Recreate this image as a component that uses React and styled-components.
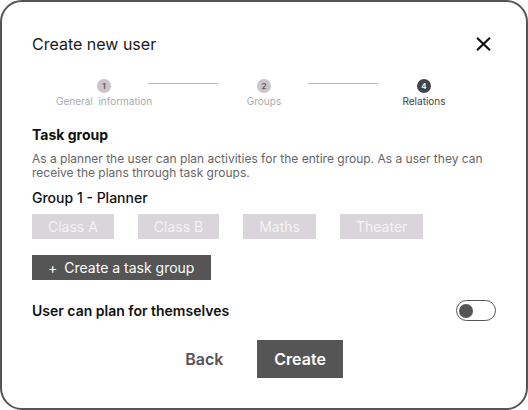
import React from "react";
import styled, { createGlobalStyle } from "styled-components";

const GlobalStyle = createGlobalStyle`
  * { box-sizing: border-box; }
  body {
    margin: 0;
    background: #ffffff;
    font-family: Inter, "Noto Sans", sans-serif;
    color: #1a1a1a;
  }
`;

const steps = [
  { n: 1, label: "General  information", done: true },
  { n: 2, label: "Groups", done: true },
  { n: 4, label: "Relations", active: true },
];

const chips = ["Class A", "Class B", "Maths", "Theater"];

const CloseIcon = () => (
  <svg width="15" height="14" viewBox="0 0 15 14" fill="none">
    <path d="M1 0.8L14 13.2M14 0.8L1 13.2" stroke="#111" strokeWidth="2.2" />
  </svg>
);

export default function App() {
  return (
    <>
      <GlobalStyle />
      <Dialog>
        <Header>
          <Title>Create new user</Title>
          <CloseButton aria-label="Close">
            <CloseIcon />
          </CloseButton>
        </Header>

        <Stepper>
          {steps.map((s, i) => (
            <React.Fragment key={s.n}>
              {i > 0 && <StepLine />}
              <Step>
                <StepDot $active={s.active}>{s.n}</StepDot>
                <StepLabel $active={s.active}>{s.label}</StepLabel>
              </Step>
            </React.Fragment>
          ))}
        </Stepper>

        <SectionTitle>Task group</SectionTitle>
        <Description>
          As a planner the user can plan activities for the entire group. As a
          user they can receive the plans through task groups.
        </Description>
        <GroupTitle>Group 1 - Planner</GroupTitle>
        <ChipRow>
          {chips.map((c) => (
            <Chip key={c}>{c}</Chip>
          ))}
        </ChipRow>
        <AddButton>
          <span>+</span>Create a task group
        </AddButton>

        <ToggleRow>
          <ToggleLabel>User can plan for themselves</ToggleLabel>
          <Toggle>
            <Knob />
          </Toggle>
        </ToggleRow>

        <Actions>
          <ActionButton>Back</ActionButton>
          <ActionButton $primary>Create</ActionButton>
        </Actions>
      </Dialog>
    </>
  );
}

const Dialog = styled.div`
  width: 528px;
  height: 410px;
  border: 2px solid #555555;
  border-radius: 22px;
  padding: 30px 30px 0 30px;
  display: flex;
  flex-direction: column;
  background: #ffffff;
`;

const Header = styled.div`
  display: flex;
  align-items: center;
  justify-content: space-between;
  height: 24px;
`;

const Title = styled.h1`
  margin: 0;
  font-size: 16px;
  line-height: 24px;
  font-weight: 400;
  color: #1a1a1a;
`;

const CloseButton = styled.button`
  border: none;
  background: none;
  padding: 0;
  margin-right: 5px;
  display: flex;
  cursor: pointer;
`;

const Stepper = styled.div`
  display: grid;
  grid-template-columns: 80px 1fr 80px 1fr 80px;
  margin: 23px 32px 0;
`;

const Step = styled.div`
  display: flex;
  flex-direction: column;
  align-items: center;
`;

const StepDot = styled.div`
  width: 14px;
  height: 14px;
  border-radius: 50%;
  background: ${(p) => (p.$active ? "#444444" : "#c9c5ca")};
  color: ${(p) => (p.$active ? "#ffffff" : "#555555")};
  font-size: 8px;
  font-weight: 600;
  display: flex;
  align-items: center;
  justify-content: center;
`;

const StepLabel = styled.div`
  margin-top: 2px;
  font-size: 10px;
  line-height: 12px;
  white-space: pre;
  color: ${(p) => (p.$active ? "#444444" : "#aaaaaa")};
`;

const StepLine = styled.div`
  height: 1px;
  background: #b8b8b8;
  margin: 4px 6px 0 4px;
`;

const SectionTitle = styled.h2`
  margin: 19px 0 0;
  font-size: 14px;
  line-height: 18px;
  font-weight: 700;
  color: #111111;
`;

const Description = styled.p`
  margin: 8px 0 0;
  font-size: 12px;
  line-height: 14px;
  color: #666666;
`;

const GroupTitle = styled.h3`
  margin: 9px 0 0;
  font-size: 14px;
  line-height: 18px;
  font-weight: 500;
  color: #111111;
`;

const ChipRow = styled.div`
  display: flex;
  gap: 24px;
  margin-top: 7px;
`;

const Chip = styled.div`
  height: 25px;
  line-height: 25px;
  padding: 0 16px;
  background: #d9d5da;
  color: #f5f3f5;
  font-size: 14px;
`;

const AddButton = styled.button`
  align-self: flex-start;
  margin-top: 16px;
  height: 25px;
  padding: 0 17px 0 16px;
  border: none;
  background: #555555;
  color: #ffffff;
  font-family: inherit;
  font-size: 14px;
  display: flex;
  align-items: center;
  gap: 7px;
`;

const ToggleRow = styled.div`
  display: flex;
  align-items: center;
  justify-content: space-between;
  margin-top: 20px;
  height: 21px;
`;

const ToggleLabel = styled.span`
  font-size: 14px;
  font-weight: 600;
  color: #111111;
`;

const Toggle = styled.div`
  width: 40px;
  height: 21px;
  border: 1.5px solid #555555;
  border-radius: 11px;
  display: flex;
  align-items: center;
  padding-left: 2px;
`;

const Knob = styled.div`
  width: 14px;
  height: 14px;
  border-radius: 50%;
  background: #555555;
`;

const Actions = styled.div`
  display: flex;
  justify-content: center;
  gap: 34px;
  margin-top: 19px;
`;

const ActionButton = styled.button`
  height: 38px;
  padding: ${(p) => (p.$primary ? "0 17px" : "0")};
  border: none;
  font-family: inherit;
  font-size: 16px;
  font-weight: 600;
  background: ${(p) => (p.$primary ? "#555555" : "transparent")};
  color: ${(p) => (p.$primary ? "#ffffff" : "#555555")};
`;
